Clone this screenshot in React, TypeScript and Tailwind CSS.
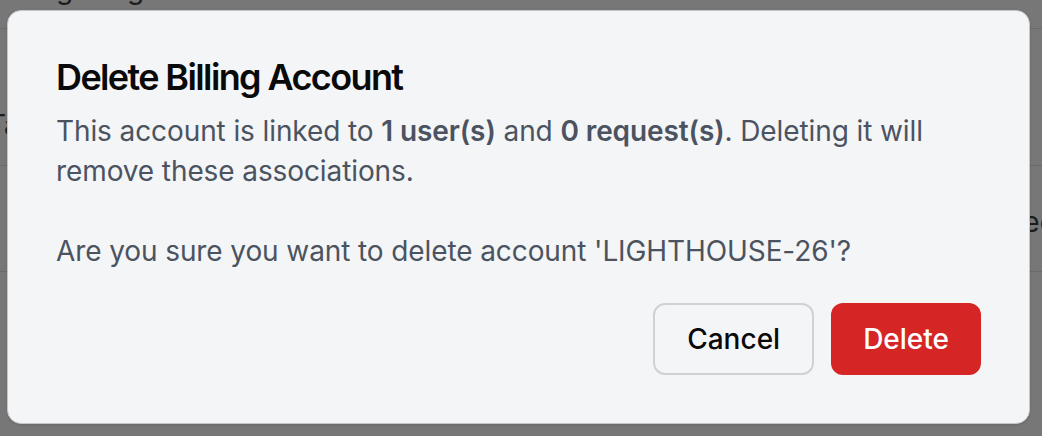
const font = { fontFamily: 'Inter, "Noto Sans", sans-serif' };

function BackgroundPage() {
  return (
    <div className="absolute inset-0 bg-[#777777] text-[#1c1c1c]" style={font}>
      <div className="h-[29px] border-b border-[#6a6a6a] relative overflow-hidden">
        <div className="absolute left-[-6px] -top-[28px] text-[28px] leading-[34px] flex gap-[22px]">
          <span>Billing</span>
          <span>Tag</span>
        </div>
      </div>
      <div className="h-[137px] border-b border-[#6a6a6a] flex items-center pt-[56px]">
        <span className="text-[28px] -ml-[12px]">Tax</span>
      </div>
      <div className="h-[106px] border-b border-[#6a6a6a] flex items-center justify-end pt-[6px]">
        <span className="text-[28px] -mr-[14px]">Free</span>
      </div>
    </div>
  );
}

export default function App() {
  return (
    <div className="relative w-[1042px] h-[436px] overflow-hidden">
      <BackgroundPage />
      <div className="absolute inset-0 pt-[10px] pl-[7px]">
        <div
          className="w-[1023px] rounded-[14px] border border-[#c4c6cb] bg-[#f4f5f7] p-[48px] flex flex-col gap-[32px] shadow-sm"
          style={font}
        >
          <div className="flex flex-col gap-[16px]">
            <h2 className="text-[36px] leading-[36px] font-semibold tracking-[-0.045em] text-[#0a0a0a]">
              Delete Billing Account
            </h2>
            <p className="text-[28px] leading-[40px] tracking-[-0.1px] text-[#4b5360]">
              This account is linked to <strong className="font-semibold">1 user(s)</strong> and{' '}
              <strong className="font-semibold">0 request(s)</strong>. Deleting it will remove these associations.
              <br />
              <br />
              Are you sure you want to delete account 'LIGHTHOUSE-26'?
            </p>
          </div>
          <div className="flex justify-end gap-[17px]">
            <button className="h-[72px] px-[32px] rounded-[12px] border-2 border-[#cfd1d6] bg-[#f4f5f7] text-[28px] font-medium text-[#0a0a0a]">
              Cancel
            </button>
            <button className="h-[72px] px-[32px] rounded-[12px] bg-[#d52525] text-[28px] font-medium text-white">
              Delete
            </button>
          </div>
        </div>
      </div>
    </div>
  );
}
